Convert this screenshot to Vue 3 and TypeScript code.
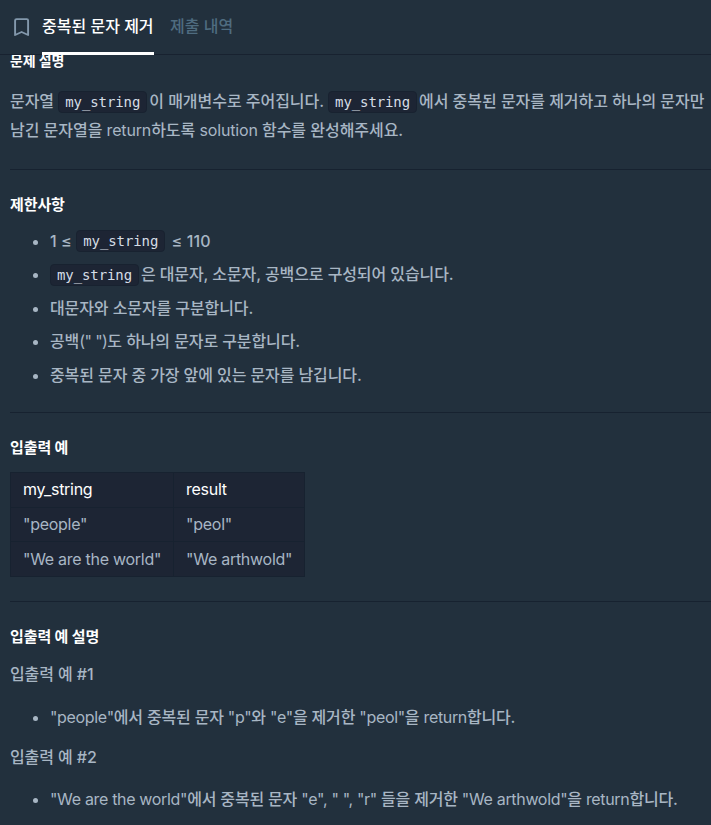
<script setup lang="ts">
interface Example {
  input: string
  result: string
}

const examples: Example[] = [
  { input: '"people"', result: '"peol"' },
  { input: '"We are the world"', result: '"We arthwold"' },
]
</script>

<template>
  <div class="page">
    <header class="tabs">
      <svg class="bookmark" viewBox="0 0 16 20" fill="none" aria-hidden="true">
        <path d="M2.6 1.1H12.8Q14.1 1.1 14.1 2.4V17L7.6 14L1.1 17V2.4Q1.1 1.1 2.6 1.1Z" />
      </svg>
      <a class="tab active">중복된 문자 제거</a>
      <a class="tab">제출 내역</a>
    </header>

    <main class="content">
      <section class="intro">
        <h6>문제 설명</h6>
        <p>문자열 <code>my_string</code>이 매개변수로 주어집니다. <code>my_string</code>에서 중복된 문자를 제거하고 하나의 문자만<br />남긴 문자열을 <span class="en">return</span>하도록 <span class="en">solution</span> 함수를 완성해주세요.</p>
      </section>

      <section class="limits">
        <h6>제한사항</h6>
        <ul>
          <li class="range">1 ≤ <code>my_string</code> ≤ 110</li>
          <li><code>my_string</code>은 대문자, 소문자, 공백으로 구성되어 있습니다.</li>
          <li>대문자와 소문자를 구분합니다.</li>
          <li>공백<span class="blank">(" ")</span>도 하나의 문자로 구분합니다.</li>
          <li>중복된 문자 중 가장 앞에 있는 문자를 남깁니다.</li>
        </ul>
      </section>

      <section class="samples">
        <h6>입출력 예</h6>
        <table>
          <thead>
            <tr><th>my_string</th><th>result</th></tr>
          </thead>
          <tbody>
            <tr v-for="e in examples" :key="e.input">
              <td>{{ e.input }}</td>
              <td>{{ e.result }}</td>
            </tr>
          </tbody>
        </table>
      </section>

      <section class="notes">
        <h6>입출력 예 설명</h6>
        <p>입출력 예 #1</p>
        <ul>
          <li><span class="en">"people"</span>에서 중복된 문자 <span class="en">"p"</span>와 <span class="en">"e"</span>을 제거한 <span class="en">"peol"</span>을 <span class="en">return</span>합니다.</li>
        </ul>
        <p>입출력 예 #2</p>
        <ul>
          <li><span class="en">"We are the world"</span>에서 중복된 문자 <span class="en">"e", " ", "r"</span> 들을 제거한 <span class="en">"We arthwold"</span>을 <span class="en">return</span>합니다.</li>
        </ul>
      </section>
    </main>
  </div>
</template>

<style>
body {
  background: #22303d;
}
</style>

<style scoped>
.page {
  height: 825px;
  overflow: hidden;
  background: #22303d;
  color: #a8b6c4;
  font-family: Inter, "Noto Sans CJK KR", sans-serif;
  font-size: 16px;
}
.tabs {
  position: relative;
  z-index: 1;
  box-sizing: border-box;
  display: flex;
  height: 55px;
  padding-left: 14px;
  border-bottom: 1px solid #182230;
  background: #22303d;
}
.bookmark {
  width: 16px;
  height: 20px;
  margin: 18px 12px 0 0;
}
.bookmark path {
  stroke: #8398ac;
  stroke-width: 1.9;
  stroke-linejoin: round;
}
.tab {
  box-sizing: border-box;
  height: 55px;
  margin-right: 16.5px;
  font-weight: 500;
  line-height: 52px;
  color: #4f6c80;
  white-space: nowrap;
}
.tab.active {
  border-bottom: 3px solid #fff;
  color: #fff;
}
.content {
  margin-top: -6px;
  padding-left: 10px;
  font-weight: 500;
  letter-spacing: -0.1px;
}
section {
  box-sizing: border-box;
}
section + section {
  border-top: 1px solid #172230;
  padding-top: 23px;
}
.intro {
  height: 120px;
}
.limits {
  height: 243px;
}
.samples {
  height: 189px;
}
h6 {
  height: 24px;
  margin: 0;
  color: #fff;
  font-size: 15px;
  font-weight: 700;
  line-height: 24px;
}
.intro h6 {
  font-size: 14px;
}
p {
  margin: 0;
  line-height: 29px;
  white-space: nowrap;
}
.intro p {
  margin-top: 14px;
  letter-spacing: -0.04px;
}
.en {
  font-weight: 400;
  letter-spacing: -0.28px;
}
.intro .en {
  letter-spacing: -0.15px;
}
.blank {
  font-weight: 400;
  letter-spacing: -0.6px;
}
code {
  display: inline-block;
  box-sizing: border-box;
  height: 22px;
  margin: 0 2px 2px 0;
  padding: 0 6px;
  border: 1px solid #182230;
  border-radius: 4px;
  background: #1d2534;
  color: #d5dde6;
  font: 14px/20px "DejaVu Sans Mono", monospace;
  letter-spacing: -0.1px;
  vertical-align: middle;
}
ul {
  margin: 0;
  padding: 0 0 0 40px;
}
li {
  height: 33.6px;
  line-height: 28px;
  white-space: nowrap;
}
.range {
  letter-spacing: 0.1px;
}
.limits ul {
  margin-top: 9.6px;
}
table {
  margin-top: 12px;
  border-collapse: collapse;
  background: #1d2534;
  letter-spacing: -0.28px;
}
th,
td {
  box-sizing: border-box;
  height: 34.6px;
  padding: 0 12px;
  border: 1px solid #172230;
  font-weight: 400;
  line-height: 24px;
  text-align: left;
  white-space: nowrap;
}
th {
  padding-bottom: 2px;
  color: #fff;
}
.notes p {
  height: 29px;
  margin-top: 11px;
}
.notes ul {
  margin-top: 14px;
  letter-spacing: -0.18px;
}
.notes ul .en {
  letter-spacing: -0.33px;
}
.notes ul + p {
  margin-top: 6px;
}
.notes ul + p + ul {
  margin-top: 13px;
}
</style>
